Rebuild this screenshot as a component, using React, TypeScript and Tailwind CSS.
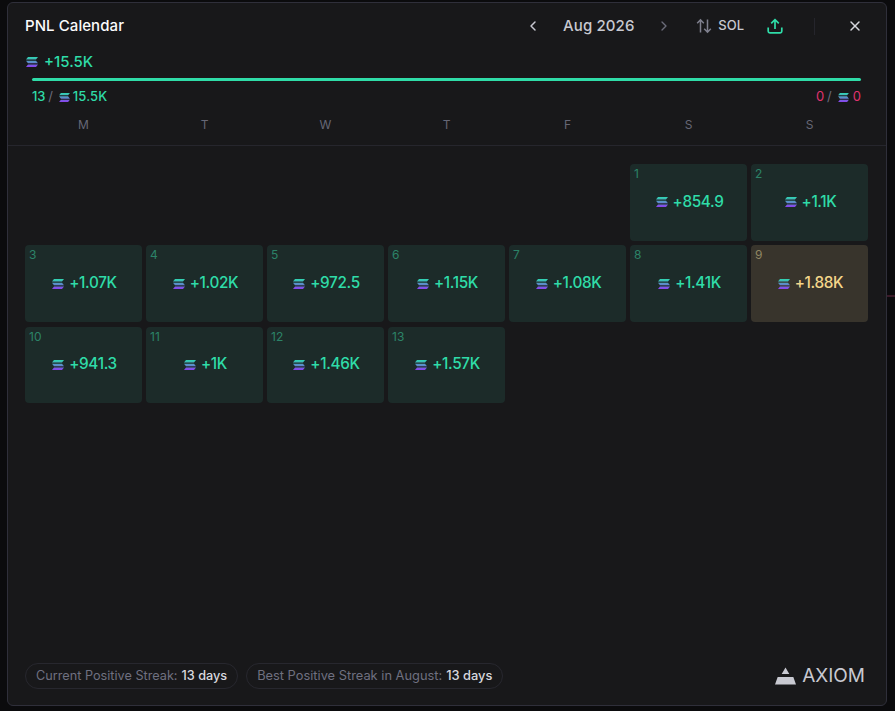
import React from "react";
import { ChevronLeft, ChevronRight, X } from "lucide-react";

let uid = 0;
function Sol({ className = "w-[12px] h-[10px]" }: { className?: string }) {
  const id = React.useMemo(() => `sol${uid++}`, []);
  return (
    <svg viewBox="0 0 12 10" className={`${className} shrink-0`}>
      <defs>
        <linearGradient id={id} x1="0" y1="0" x2="0" y2="1">
          <stop offset="0" stopColor="#2fd6b0" />
          <stop offset="0.5" stopColor="#5a8fc8" />
          <stop offset="1" stopColor="#8b3ff0" />
        </linearGradient>
      </defs>
      <path
        fill={`url(#${id})`}
        d="M2 0H12L10 2.6H0ZM0 3.7H10L12 6.3H2ZM2 7.4H12L10 10H0Z"
      />
    </svg>
  );
}

type Cell = { d: number; v: string; hi?: boolean } | null;
const cells: Cell[] = [
  null, null, null, null, null,
  { d: 1, v: "+854.9" },
  { d: 2, v: "+1.1K" },
  { d: 3, v: "+1.07K" },
  { d: 4, v: "+1.02K" },
  { d: 5, v: "+972.5" },
  { d: 6, v: "+1.15K" },
  { d: 7, v: "+1.08K" },
  { d: 8, v: "+1.41K" },
  { d: 9, v: "+1.88K", hi: true },
  { d: 10, v: "+941.3" },
  { d: 11, v: "+1K" },
  { d: 12, v: "+1.46K" },
  { d: 13, v: "+1.57K" },
];

const days = ["M", "T", "W", "T", "F", "S", "S"];

export default function App() {
  return (
    <div
      className="relative w-[895px] h-[711px] overflow-hidden bg-[#0b0b0d] pt-[2px] pl-[7px]"
      style={{ fontFamily: "Inter, 'Liberation Sans', sans-serif" }}
    >
      <div className="absolute right-0 top-[295px] w-[8px] h-[2px] bg-[#3a1a28]" />
      <div className="w-[880px] h-[704px] rounded-[6px] border border-[#2f2f3a] bg-[#18181a] flex flex-col">
        <div className="h-[46px] shrink-0 flex items-center pl-[17px] pr-[23px]">
          <div className="text-[15px] font-medium text-[#fcfcfc] tracking-[0.07px] flex-1">PNL Calendar</div>
          <ChevronLeft className="w-[16px] h-[16px] text-[#c8c9d1]" strokeWidth={2.2} />
          <div className="w-[115px] text-center text-[15px] font-medium tracking-[0.1px] text-[#c8c9d1]">Aug 2026</div>
          <ChevronRight className="w-[16px] h-[16px] text-[#6b6c7a]" strokeWidth={2} />
          <svg viewBox="0 0 16 16" className="ml-[24px] w-[16px] h-[16px] text-[#7f808e]" fill="none" stroke="currentColor" strokeWidth="1.5">
            <path d="M4.5 14.5V2M1.2 5.2L4.5 1.8L7.8 5.2M11.5 1.5V14M8.2 10.8L11.5 14.2L14.8 10.8" />
          </svg>
          <div className="ml-[6px] text-[13px] font-medium text-[#c8c9d1]">SOL</div>
          <svg viewBox="0 0 16 16" className="ml-[23px] w-[16px] h-[16px]" fill="none" stroke="#2fdca8" strokeWidth="1.7">
            <path d="M8 11V2M4.2 5.4L8 1.6L11.8 5.4" />
            <path d="M1.2 9.5V13.2Q1.2 14.8 2.8 14.8H13.2Q14.8 14.8 14.8 13.2V9.5" />
          </svg>
          <div className="ml-[31px] w-px h-[17px] bg-[#25252c]" />
          <X className="ml-[32px] w-[16px] h-[16px] text-[#d6d7dd]" strokeWidth={2.2} />
        </div>

        <div className="shrink-0 pl-[18px] mt-[1px] flex items-center h-[24px] gap-[6px] text-[15px] font-medium text-[#2fdca8]">
          <Sol className="w-[12px] h-[10px]" />
          <span>+15.5K</span>
        </div>

        <div className="shrink-0 mt-[4px] ml-[24px] mr-[25px] h-[3px] rounded-full bg-[#2fdca8]" />

        <div className="shrink-0 mt-[8px] ml-[24px] mr-[25px] h-[16px] flex items-center justify-between text-[13px] font-medium">
          <div className="flex items-center">
            <span className="text-[#2fdca8] tracking-[-0.2px]">13</span>
            <span className="text-[#6b6c7a] ml-[3px] font-normal">/</span>
            <Sol className="ml-[6px] w-[11px] h-[9px]" />
            <span className="text-[#2fdca8] ml-[3px] tracking-[0.1px]">15.5K</span>
          </div>
          <div className="flex items-center">
            <span className="text-[#e0326f] font-normal">0</span>
            <span className="text-[#6b6c7a] ml-[3px] font-normal">/</span>
            <Sol className="ml-[6px] w-[11px] h-[9px]" />
            <span className="text-[#e0326f] ml-[4px] font-normal">0</span>
          </div>
        </div>

        <div className="shrink-0 mt-[13px] h-[27px] px-[17px] grid grid-cols-[repeat(7,117px)] gap-x-[4px]">
          {days.map((d, i) => (
            <div key={i} className="text-center text-[12px] leading-[13px] text-[#666776]">{d}</div>
          ))}
        </div>
        <div className="shrink-0 h-px bg-[#26262d]" />

        <div className="mt-[18px] px-[17px] grid grid-cols-[repeat(7,117px)] auto-rows-[76.7px] gap-x-[4px] gap-y-[4.6px]">
          {cells.map((c, i) =>
            c ? (
              <div
                key={i}
                className={`relative rounded-[4px] flex items-center justify-center ${c.hi ? "bg-[#38342c]" : "bg-[#1c2b29]"}`}
              >
                <span className={`absolute left-[4px] top-[2px] text-[12px] leading-[15px] ${c.hi ? "text-[#8f8663]" : "text-[#2c8368]"}`}>{c.d}</span>
                <div className={`flex items-center gap-[5px] pl-[2px] text-[15.3px] font-medium tracking-[-0.35px] ${c.hi ? "text-[#f5d78a]" : "text-[#2fdca8]"}`}>
                  <Sol className="w-[12px] h-[10px]" />
                  <span>{c.v}</span>
                </div>
              </div>
            ) : (
              <div key={i} />
            )
          )}
        </div>

        <div className="mt-auto mb-[16px] pl-[17px] pr-[21px] flex items-center">
          <div className="h-[26px] px-[10px] rounded-full border border-[#27272e] flex items-center text-[12.7px] text-[#6f7080]">
            Current Positive Streak:<span className="ml-[4px] font-medium text-[#d8d9df]">13 days</span>
          </div>
          <div className="ml-[8px] h-[26px] px-[10px] rounded-full border border-[#27272e] flex items-center text-[12.85px] text-[#6f7080]">
            Best Positive Streak in August:<span className="ml-[4px] font-medium text-[#d8d9df]">13 days</span>
          </div>
          <div className="ml-auto flex items-center gap-[6px]">
            <svg viewBox="0 0 22 18" className="w-[21px] h-[18px]">
              <path fill="#c8c9d1" d="M7 7L11 0L15 7ZM2.8 10L0 18H22L19.2 10Z" />
            </svg>
            <span className="text-[19px] leading-[22px] text-[#c8c9d1]">AXIOM</span>
          </div>
        </div>
      </div>
    </div>
  );
}
